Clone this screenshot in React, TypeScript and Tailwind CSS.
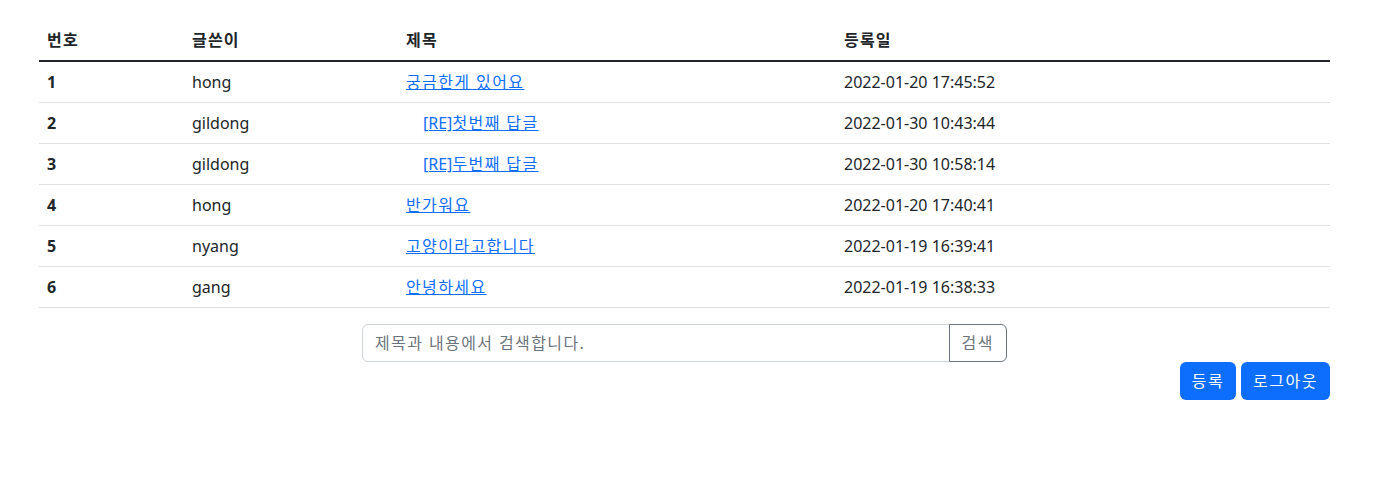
import React from 'react'

type Post = {
  no: number
  writer: string
  title: string
  reply?: boolean
  date: string
}

const posts: Post[] = [
  { no: 1, writer: 'hong', title: '궁금한게 있어요', date: '2022-01-20 17:45:52' },
  { no: 2, writer: 'gildong', title: '첫번째 답글', reply: true, date: '2022-01-30 10:43:44' },
  { no: 3, writer: 'gildong', title: '두번째 답글', reply: true, date: '2022-01-30 10:58:14' },
  { no: 4, writer: 'hong', title: '반가워요', date: '2022-01-20 17:40:41' },
  { no: 5, writer: 'nyang', title: '고양이라고합니다', date: '2022-01-19 16:39:41' },
  { no: 6, writer: 'gang', title: '안녕하세요', date: '2022-01-19 16:38:33' },
]

const font = {
  fontFamily: '"Noto Sans", "Noto Sans CJK KR", sans-serif',
}

export default function App() {
  return (
    <div className="min-h-[501px] bg-white text-[#212529]" style={font}>
      <div className="ml-[39px] w-[1291px] pt-[20px]">
        <table className="w-full table-fixed border-collapse text-[16px] leading-6">
          <thead>
            <tr className="border-b-2 border-[#212529]">
              <th className="w-[145px] px-2 py-2 text-left font-bold tracking-[1.2px]">번호</th>
              <th className="w-[214px] px-2 py-2 text-left font-bold tracking-[1.2px]">글쓴이</th>
              <th className="w-[438px] px-2 py-2 text-left font-bold tracking-[1.2px]">제목</th>
              <th className="px-2 py-2 text-left font-bold tracking-[1.2px]">등록일</th>
            </tr>
          </thead>
          <tbody>
            {posts.map((p) => (
              <tr key={p.no} className="border-b border-[#dee2e6]">
                <th className="px-2 py-2 text-left font-bold">{p.no}</th>
                <td className="px-2 py-2">{p.writer}</td>
                <td className="px-2 py-2">
                  <a
                    href="#"
                    className={`text-[#0d6efd] underline tracking-[1.4px] ${p.reply ? 'ml-[17px]' : ''}`}
                  >
                    {p.reply && <span className="tracking-normal">[RE]</span>}
                    {p.title}
                  </a>
                </td>
                <td className="px-2 py-2">{p.date}</td>
              </tr>
            ))}
          </tbody>
        </table>

        <form className="mx-auto mt-4 flex w-[645px]" onSubmit={(e) => e.preventDefault()}>
          <input
            type="text"
            placeholder="제목과 내용에서 검색합니다."
            className="h-[38px] flex-1 rounded-l-[6px] border border-[#ced4da] px-3 text-[16px] tracking-[1.4px] text-[#212529] outline-none placeholder:text-[#6c757d]"
            style={font}
          />
          <button
            type="submit"
            className="-ml-px h-[38px] rounded-r-[6px] border border-[#6c757d] px-3 text-[16px] tracking-[1.5px] text-[#6c757d]"
          >
            검색
          </button>
        </form>

        <div className="flex justify-end gap-[5px]">
          <button className="h-[38px] rounded-[6px] bg-[#0d6efd] px-3 text-[16px] tracking-[1.5px] text-white">
            등록
          </button>
          <button className="h-[38px] rounded-[6px] bg-[#0d6efd] px-3 text-[16px] tracking-[1.5px] text-white">
            로그아웃
          </button>
        </div>
      </div>
    </div>
  )
}
